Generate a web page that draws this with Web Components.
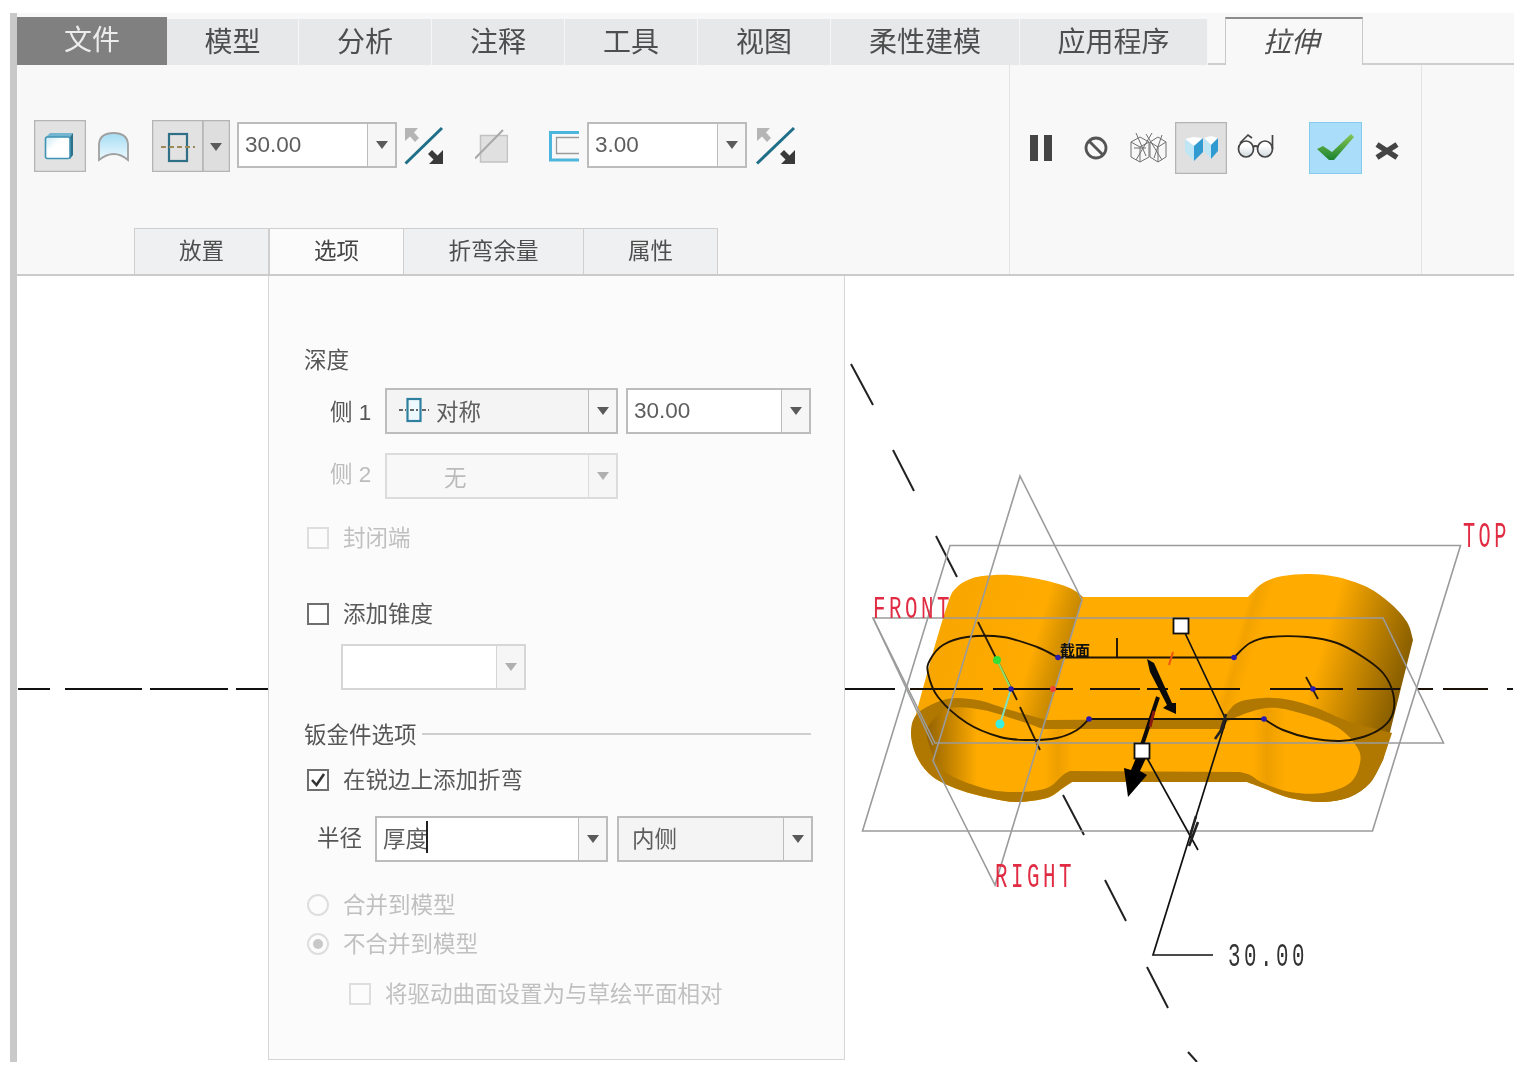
<!DOCTYPE html>
<html lang="zh"><head><meta charset="utf-8"><title>拉伸</title>
<style>html,body{margin:0;background:#fff}</style></head>
<body><creo-app></creo-app>
<script>
const FONT='"Liberation Sans","Noto Sans CJK SC",sans-serif';
function simple(name,css,html){customElements.define(name,class extends HTMLElement{constructor(){super();this.attachShadow({mode:'open'}).innerHTML=`<style>${css}</style>${html}`}})}
class Lazy extends HTMLElement{constructor(){super();this.attachShadow({mode:'open'})}}

/* ---------- ribbon tab ---------- */
customElements.define('ribbon-tab',class extends Lazy{
connectedCallback(){const w=this.getAttribute('w');
this.shadowRoot.innerHTML=`<style>
:host{display:flex;align-items:center;justify-content:center;box-sizing:border-box;width:${w}px;height:46px;padding-bottom:5px;background:#e6e8ea;color:#4e4e4e;font-size:28px;border-right:1px solid #f6f6f6;flex:none}
:host([kind=file]){background:#808080;color:#ececec;height:48px;border:0;padding-bottom:6px}
:host([kind=ctx]){background:#f8f8f8;height:48px;border:1px solid #c9c9c9;border-top:2px solid #8c8c8c;border-bottom:0;font-style:italic;margin-left:17px;padding-right:6px}
</style><slot></slot>`}});

simple('ribbon-tabs',`:host{display:flex;align-items:flex-end;height:48px}
i{flex:1;border-bottom:2px solid #cfcfcf;height:46px;box-sizing:border-box}
.s{flex:none;width:17px;margin-right:-17px;border-bottom:2px solid #cfcfcf;height:46px;box-sizing:border-box}`,
`<ribbon-tab kind="file" w="150">文件</ribbon-tab><ribbon-tab w="132">模型</ribbon-tab><ribbon-tab w="133">分析</ribbon-tab><ribbon-tab w="133">注释</ribbon-tab><ribbon-tab w="133">工具</ribbon-tab><ribbon-tab w="133">视图</ribbon-tab><ribbon-tab w="189">柔性建模</ribbon-tab><ribbon-tab w="188">应用程序</ribbon-tab><span class="s"></span><ribbon-tab kind="ctx" w="138">拉伸</ribbon-tab><i></i>`);

/* ---------- icons: every viewBox is in page coordinates ---------- */
const ICONS={
solid:[34,120,52,52,`<rect x="34.5" y="120.5" width="51" height="51" fill="#e2e2e2" stroke="#b4b4b4" stroke-width="1.5"/>
<defs><linearGradient id="a" x1="0" y1="0" x2="1" y2="1"><stop offset="0" stop-color="#c9e9f5"/><stop offset=".4" stop-color="#fff"/></linearGradient></defs>
<polygon points="46,137 50,133 73,133 70,137" fill="#74b6cf"/><polygon points="70,137 73,133 73,155 70,159" fill="#2d7088"/>
<rect x="45.5" y="137" width="24.5" height="21.5" rx="2" fill="url(#a)" stroke="#3f93b4" stroke-width="1.6"/>`],
surface:[97,120,33,52,`<defs><linearGradient id="a" x1="0" y1="0" x2="0" y2="1"><stop offset="0" stop-color="#a4dcf2"/><stop offset="1" stop-color="#eefaff"/></linearGradient></defs>
<path d="M99 160V144Q100 133 113.5 133Q127 133 128 144V160Q114 148 99 160Z" fill="url(#a)" stroke="#a0a0a0" stroke-width="1.8"/>`],
depth:[152,120,78,52,`<rect x="152.5" y="120.5" width="50.5" height="51" fill="#e2e2e2" stroke="#b4b4b4" stroke-width="1.5"/><rect x="203" y="120.5" width="26.5" height="51" fill="#dedede" stroke="#b4b4b4" stroke-width="1.5"/>
<rect x="169" y="134" width="18" height="27" fill="none" stroke="#2f6f88" stroke-width="2.2"/><path d="M161 147H195" stroke="#9c8a58" stroke-width="2.2" stroke-dasharray="5 3"/><path d="M210 143H222L216 151Z" fill="#5a5a5a"/>`],
flip:[404,120,40,52,`<path d="M405 128H418L414 132.5L419 138L415 142L410 136.5L405 141Z" fill="#b5b5b5"/><path d="M443 164H429L433.5 159.5L428 154L432 150L437.5 155.5L443 150Z" fill="#3a3a3a"/><path d="M405.5 163.5L442 128" stroke="#1f6f88" stroke-width="3"/>`],
thin:[475,120,33,52,`<rect x="480.5" y="135.5" width="27" height="26.5" fill="#e0e0e0" stroke="#c2c2c2" stroke-width="1.5"/><path d="M475 158.5L503 130" stroke="#a9a9a9" stroke-width="2"/>`],
thick:[549,120,31,52,`<path d="M579 132.5H550.5V160H579" fill="none" stroke="#4cb6dd" stroke-width="3"/><path d="M579 137.5H556.5V153.5H579" fill="none" stroke="#9a9a9a" stroke-width="1.3"/>`],
flip2:[755,120,41,52,`<path d="M757 128H770L766 132.5L771 138L767 142L762 136.5L757 141Z" fill="#b5b5b5"/><path d="M795 164H781L785.5 159.5L780 154L784 150L789.5 155.5L795 150Z" fill="#3a3a3a"/><path d="M757 163.5L794 128" stroke="#1f6f88" stroke-width="3"/>`],
pause:[1026,122,30,52,`<rect x="1030" y="135" width="8" height="26" fill="#444"/><rect x="1044" y="135" width="8" height="26" fill="#444"/>`],
stop:[1082,122,28,52,`<circle cx="1096" cy="148" r="10" fill="none" stroke="#555" stroke-width="2.8"/><path d="M1089 141L1103 155" stroke="#555" stroke-width="2.8"/>`],
wire:[1128,122,40,52,`<g fill="none" stroke="#707070" stroke-width="1"><path d="M1131 142L1140 137L1149 142V157L1140 162L1131 157Z M1140 147V162 M1131 142L1140 147L1149 142 M1136 133L1146 156 M1152 133L1136 160 M1134 148L1146 148"/><path d="M1150 142L1158 137L1166 142V157L1158 162L1150 157Z M1158 147V162 M1150 142L1158 147L1166 142 M1146 134L1162 160 M1162 135L1154 158"/></g>`],
shade:[1175,122,52,52,`<rect x="1175.5" y="122.5" width="51" height="51" fill="#e0e0e0" stroke="#b4b4b4" stroke-width="1.5"/>
<polygon points="1185,139 1193,137 1203,138 1194,146" fill="#fff"/><polygon points="1185,139 1194,146 1194,161 1185,152" fill="#bfe6f5"/><polygon points="1203,138 1194,146 1194,161 1203,152" fill="#2f9bd0"/>
<polygon points="1204,138 1211,136 1218,138 1211,145" fill="#fff"/><polygon points="1204,138 1211,145 1211,159 1204,151" fill="#bfe6f5"/><polygon points="1218,138 1211,145 1211,159 1218,151" fill="#2f9bd0"/>`],
glass:[1234,122,45,52,`<defs><linearGradient id="a" x1="0" y1="0" x2="0" y2="1"><stop offset=".3" stop-color="#fff"/><stop offset="1" stop-color="#cfd8dc"/></linearGradient></defs><g fill="url(#a)" stroke="#454545" stroke-width="1.7"><ellipse cx="1246" cy="149" rx="7.5" ry="8"/><ellipse cx="1265" cy="149" rx="7.5" ry="8"/></g><path d="M1253 147Q1255.5 145 1258 147M1240 143L1248 135L1252 138M1272.5 149V135" fill="none" stroke="#454545" stroke-width="1.7"/>`],
ok:[1309,122,53,52,`<defs><linearGradient id="a" x1="0" y1="0" x2="0" y2="1"><stop offset="0" stop-color="#86c653"/><stop offset="1" stop-color="#19822f"/></linearGradient></defs><rect x="1309.5" y="122.5" width="52" height="51" fill="#a9ddf9" stroke="#86cbec"/><polygon points="1317,149 1323,146 1332,152 1351,134 1354,137 1334,160 1329,160" fill="url(#a)"/>`],
cancel:[1370,122,32,52,`<path d="M1377 144.5L1397 157.5M1397 144.5L1377 157.5" stroke="#444" stroke-width="5.5"/>`]
};
customElements.define('ribbon-icon',class extends Lazy{
connectedCallback(){const [x,y,w,h,s]=ICONS[this.getAttribute('name')],ml=this.getAttribute('ml')||0;
this.shadowRoot.innerHTML=`<style>:host{display:block;flex:none;width:${w}px;height:${h}px;margin-left:${ml}px}svg{display:block}</style><svg width="${w}" height="${h}" viewBox="${x} ${y} ${w} ${h}">${s}</svg>`}});

/* ---------- combo ---------- */
customElements.define('combo-box',class extends Lazy{
connectedCallback(){const w=this.getAttribute('w'),ar=+this.getAttribute('arrow')||29,pad=this.getAttribute('pad')||6,ml=this.getAttribute('ml')||0,t=this.getAttribute('tone')||'white',pb=this.getAttribute('pb')||2;
const bg={white:'#fff',grey:'#f4f4f4',off:'#f8f8f8',blank:'#fff'}[t],bd=t=='off'?'#dcdcdc':t=='blank'?'#d6d6d6':'#bcbcbc',fg=t=='off'?'#bbb':'#5e5e5e',af=(t=='off'||t=='blank')?'#b0b0b0':'#5a5a5a';
this.shadowRoot.innerHTML=`<style>
:host{display:flex;box-sizing:border-box;flex:none;width:${w}px;height:46px;margin-left:${ml}px;border:2px solid ${bd};background:${bg};color:${fg};font-size:22.5px}
.v{flex:1;display:flex;align-items:center;gap:7px;padding-left:${pad}px;min-width:0;padding-bottom:${pb}px;box-sizing:border-box}
.a{flex:none;width:${ar-2}px;border-left:1.5px solid ${bd};background:#f6f6f6;display:flex;align-items:center;justify-content:center}
.a b{width:0;height:0;border:6px solid transparent;border-top:8px solid ${af};border-bottom:0}
</style><div class="v"><slot></slot></div><div class="a"><b></b></div>`}});

simple('sym-icon',`:host{display:block;width:30px;height:26px;flex:none}svg{display:block}`,`<svg width="30" height="26" viewBox="0 0 30 26"><rect x="8.5" y="2" width="13" height="22" fill="#eef9fd" stroke="#2f7f9f" stroke-width="2.2"/><path d="M0 13H7M23 13H30M11 13H19" stroke="#666" stroke-width="1.8" stroke-dasharray="4 2"/></svg>`);
simple('text-caret',`:host{display:block;width:2px;height:32px;background:#222;margin-left:-9px}`,``);

/* ---------- checks ---------- */
customElements.define('check-row',class extends Lazy{
connectedCallback(){const off=this.hasAttribute('off'),on=this.hasAttribute('on'),radio=this.hasAttribute('radio');
const bd=off?'#dedede':'#6f6f6f',fg=off?'#c0c0c0':'#5a5a5a';
this.shadowRoot.innerHTML=`<style>
:host{display:flex;align-items:center;height:22px;color:${fg};font-size:22.5px;white-space:nowrap}
.b{flex:none;box-sizing:border-box;width:22px;height:22px;border:2px solid ${bd};background:${off?'#fcfcfc':'#fff'};margin-right:14px;border-radius:${radio?'50%':'0'};display:flex;align-items:center;justify-content:center}
.d{width:10px;height:10px;border-radius:50%;background:#c8c8c8}
.t{margin-bottom:4px}
svg{display:block}
</style><span class="b">${on?(radio?'<span class="d"></span>':'<svg width="18" height="18" viewBox="0 0 18 18"><path d="M3 9L7.5 14L15 3" fill="none" stroke="#333" stroke-width="2.6"/></svg>'):''}</span><span class="t"><slot></slot></span>`}});

/* ---------- tool row ---------- */
simple('tool-row',`:host{display:flex;height:163px;color:#666}
.a,.b{display:flex;align-items:flex-start;box-sizing:border-box;border-right:1.5px solid #e4e4e4;flex:none}
.a{width:993px;padding-top:55px}.b{width:412px;padding-top:57px}
combo-box{margin-top:2px}
`,`<div class="a">
<ribbon-icon name="solid" ml="17"></ribbon-icon><ribbon-icon name="surface" ml="11"></ribbon-icon><ribbon-icon name="depth" ml="22"></ribbon-icon>
<combo-box w="160" ml="7" pad="6" pb="0">30.00</combo-box><ribbon-icon name="flip" ml="7"></ribbon-icon><ribbon-icon name="thin" ml="31"></ribbon-icon><ribbon-icon name="thick" ml="41"></ribbon-icon>
<combo-box w="160" ml="7" pad="6" pb="0">3.00</combo-box><ribbon-icon name="flip2" ml="8"></ribbon-icon></div>
<div class="b"><ribbon-icon name="pause" ml="16"></ribbon-icon><ribbon-icon name="stop" ml="26"></ribbon-icon><ribbon-icon name="wire" ml="18"></ribbon-icon><ribbon-icon name="shade" ml="7"></ribbon-icon><ribbon-icon name="glass" ml="7"></ribbon-icon><ribbon-icon name="ok" ml="30"></ribbon-icon><ribbon-icon name="cancel" ml="8"></ribbon-icon></div>`);

/* ---------- sub tabs ---------- */
simple('sub-tab',`:host{display:flex;align-items:center;justify-content:center;box-sizing:border-box;height:46px;padding-bottom:5px;background:#eef0f1;color:#4e4e4e;font-size:22.5px;border:1.5px solid #cfcfcf;border-left-width:0;border-bottom:0;flex:none}
:host([active]){background:#fbfbfb;color:#444;border-left:1.5px solid #cfcfcf}
:host([first]){border-left-width:1.5px}`,`<slot></slot>`);
simple('sub-tabs',`:host{display:flex;height:48px;padding-left:117px;box-sizing:border-box;border-bottom:2px solid #cbcbcb;align-items:flex-start}
.x{flex:none;height:46px;box-sizing:border-box;border-right:1.5px solid #e4e4e4}`,
`<sub-tab first style="width:135px">放置</sub-tab><sub-tab active style="width:135px">选项</sub-tab><sub-tab style="width:180px">折弯余量</sub-tab><sub-tab style="width:134px">属性</sub-tab><span class="x" style="width:292px"></span><span class="x" style="width:412px"></span>`);

/* ---------- option panel ---------- */
simple('option-panel',`
:host{position:absolute;left:251px;top:0;width:577px;height:784px;box-sizing:border-box;border:1.5px solid #d6d6d6;border-top:0;background:#fbfbfb;padding:73px 0 0 35px;color:#565656;font-size:22.5px}
.t{height:24px;line-height:24px}
.r{display:flex;align-items:center}
.l{flex:none;white-space:nowrap}
.off{color:#bcbcbc}
.g{display:flex;align-items:center;height:24px}
.g i{flex:1;height:1.5px;background:#cfcfcf;margin:0 33px 0 5px}
.c{margin-left:3px}
`,`<div class="t">深度</div>
<div class="r" style="margin-top:15px;padding-left:26px"><span class="l" style="width:55px;margin-bottom:2px">侧 1</span><combo-box w="233" tone="grey" pad="12"><sym-icon></sym-icon>对称</combo-box><combo-box w="185" ml="8" pad="6" pb="0">30.00</combo-box></div>
<div class="r off" style="margin-top:19px;padding-left:26px"><span class="l" style="width:55px;margin-bottom:8px">侧 2</span><combo-box w="233" tone="off" pad="57" pb="0">无</combo-box></div>
<check-row class="c" off style="margin-top:28px">封闭端</check-row>
<check-row class="c" style="margin-top:54px">添加锥度</check-row>
<div class="r" style="margin-top:19px;padding-left:37px"><combo-box w="185" tone="blank"></combo-box></div>
<div class="g" style="margin-top:32px"><span class="l" style="margin-bottom:2px">钣金件选项</span><i></i></div>
<check-row class="c" on style="margin-top:23px">在锐边上添加折弯</check-row>
<div class="r" style="margin-top:25px;padding-left:13px"><span class="l" style="width:58px;margin-bottom:6px">半径</span><combo-box w="233" pad="6" pb="4">厚度<text-caret></text-caret></combo-box><combo-box w="196" ml="9" tone="grey" pad="13" pb="4">内侧</combo-box></div>
<check-row class="c" radio off style="margin-top:32px">合并到模型</check-row>
<check-row class="c" radio off on style="margin-top:17px">不合并到模型</check-row>
<check-row off style="margin:28px 0 0 45px">将驱动曲面设置为与草绘平面相对</check-row>`);

/* ---------- the 3D model ---------- */
function seg(p){let d='L'+p[0][0]+' '+p[0][1];for(let i=0;i<p.length-1;i++){const a=p[Math.max(i-1,0)],b=p[i],c=p[i+1],e=p[Math.min(i+2,p.length-1)];
d+=`C${b[0]+(c[0]-a[0])/6} ${b[1]+(c[1]-a[1])/6} ${c[0]-(e[0]-b[0])/6} ${c[1]-(e[1]-b[1])/6} ${c[0]} ${c[1]}`}return d}
const P=(...s)=>'M'+s.map(seg).join('').slice(1)+'Z';
const sil=P([[911,733],[930,663],[948,603],[956,588],[968,580],[983,576],[1010,575],[1043,580],[1070,588],[1083,597]],[[1248,597],[1263,583],[1283,576],[1310,574],[1337,577],[1367,587],[1390,603],[1407,622],[1413,640]],[[1383,760],[1370,783],[1350,797],[1323,802],[1290,798],[1263,788],[1247,782]],[[1072,782],[1063,788],[1047,798],[1017,802],[990,798],[960,790],[933,777],[917,757],[911,733]]);
const rim=P([[1047,720],[1010,710],[977,700],[947,699],[918,713],[911,733],[917,757],[933,777],[960,790],[990,798],[1017,802],[1047,798],[1063,788],[1072,782]],[[1247,782],[1263,788],[1290,798],[1323,802],[1350,797],[1370,783],[1383,760]],[[1392,733],[1350,722],[1317,708],[1290,700],[1263,698],[1237,703],[1223,719]]);
const hol=P([[1225,729],[1230,720],[1267,708],[1300,713],[1337,727],[1357,747],[1360,763],[1350,783],[1323,793],[1290,792],[1263,783],[1250,775],[1240,772]],[[1070,771],[1063,775],[1047,788],[1017,792],[983,788],[943,770],[927,737],[933,720],[950,708],[983,710],[1017,720],[1043,729]]);
const open=p=>'M'+seg(p).slice(1);
const sk1=open([[1058,657.5],[1037,647],[1003,637],[967,637],[943,645],[930,660],[928,673],[938,697],[967,723],[1000,737],[1027,740],[1057,738],[1077,730],[1089,719]]);
const sk2=open([[1234,657.5],[1250,643],[1270,637],[1307,637],[1337,643],[1363,657],[1383,673],[1393,693],[1393,713],[1383,727],[1363,737],[1340,741],[1310,738],[1283,730],[1264,719]]);
const hd=[[18,50],[65,142],[150,228],[236,268],[845,895],[910,983],[993,1073],[1090,1140],[1147,1168],[1180,1240],[1270,1343],[1357,1400],[1417,1433],[1443,1488],[1507,1513]];
const dg=[[851,364,873,405],[893,450,914,491],[936,536,957,577],[978,622,1017,700],[1020,707,1040,750],[1063,795,1084,835],[1105,880,1126,921],[1147,967,1168,1008],[1188,1052,1197,1062]];
const dots=[[1058,657.5],[1089,719],[1234,657.5],[1264,719],[1011,689],[1313,689]];
simple('model-view',`:host{position:absolute;inset:0;display:block}svg{display:block}
text{font-family:"Liberation Mono","Noto Sans CJK SC",monospace}`,
`<svg width="1497" height="786" viewBox="17 276 1497 786">
<defs>
<linearGradient id="w" gradientUnits="userSpaceOnUse" x1="929" y1="650" x2="1380" y2="783">
<stop offset="0" stop-color="#f8a600"/><stop offset=".21" stop-color="#ffab00"/><stop offset=".28" stop-color="#c78800"/><stop offset=".283" stop-color="#ffab00"/><stop offset=".62" stop-color="#ffab00"/><stop offset=".635" stop-color="#f2a200"/><stop offset=".665" stop-color="#ffab00"/><stop offset=".8" stop-color="#ffab00"/><stop offset=".92" stop-color="#b07800"/><stop offset="1" stop-color="#7f5800"/></linearGradient>
<linearGradient id="h" gradientUnits="userSpaceOnUse" x1="925" y1="0" x2="1400" y2="0">
<stop offset="0" stop-color="#8f6000"/><stop offset=".11" stop-color="#ffab00"/><stop offset=".25" stop-color="#ffab00"/><stop offset=".28" stop-color="#ee9f00"/><stop offset=".31" stop-color="#ffab00"/><stop offset=".69" stop-color="#ffab00"/><stop offset=".72" stop-color="#ee9f00"/><stop offset=".76" stop-color="#ffab00"/></linearGradient>
</defs>
<g stroke="#111" stroke-width="2" fill="none"><path d="${hd.map(a=>`M${a[0]} 689H${a[1]}`).join('')}"/></g>
<path d="${dg.slice(0,3).concat(dg.slice(5)).map(a=>`M${a[0]} ${a[1]}L${a[2]} ${a[3]}`).join('')}" stroke="#222" stroke-width="2"/>
<path d="${sil}" fill="url(#w)"/><path d="${rim}" fill="#b07800"/><path d="${hol}" fill="url(#h)"/>
<path d="${hd.slice(5,14).map(a=>`M${a[0]} 689H${a[1]}`).join('')}" stroke="#1a1208" stroke-width="2"/>
<path d="${dg.slice(3,5).map(a=>`M${a[0]} ${a[1]}L${a[2]} ${a[3]}`).join('')}M1306 677L1318 699" stroke="#2a1c05" stroke-width="1.8"/>
<path d="${sk1}${sk2}M1058 657.5H1234M1089 719H1264M1117 638V657" fill="none" stroke="#1f1505" stroke-width="1.9"/>
<g fill="none" stroke="#9b9b9b" stroke-width="1.6"><polygon points="950,545.5 1460.5,545.5 1372.5,831 862.5,831"/><polygon points="873,618 1383,618 1443.5,743 935,743"/><polygon points="1020,476 1082,600 995,885 933,761"/><path d="M873 618L933 745"/></g>
<path d="M997 660L1011 689" stroke="#8fe06a" stroke-width="2"/><path d="M1011 689L1000 724" stroke="#7fe0c0" stroke-width="2"/>
<circle cx="997" cy="660" r="4" fill="#35e035"/><circle cx="1000" cy="724" r="4.5" fill="#38efe0"/><circle cx="1053" cy="689" r="3" fill="#f04530"/>
${dots.map(d=>`<circle cx="${d[0]}" cy="${d[1]}" r="2.8" fill="#2a1ab0"/>`).join('')}
<path d="M1173 652L1169 665" stroke="#f05510" stroke-width="2"/>
<path d="M1147 659L1154 663L1172 703L1176 703L1176 714L1163 708L1167 705L1150 672Z" fill="#0a0a0a"/>
<path d="M1158 697L1142 745" stroke="#0a0a0a" stroke-width="4"/><path d="M1154 711L1150 727" stroke="#8a1a10" stroke-width="3"/>
<path d="M1136 758L1146 758L1140 771L1147 775L1128 797L1124 768L1131 770Z" fill="#000"/>
<path d="M1185 633L1226 720L1153 955H1213M1147 758L1198 850" fill="none" stroke="#111" stroke-width="1.7"/>
<path d="M1226 714L1220 733M1224 726L1215 739M1196 816L1190 836M1198 822L1189 846" fill="none" stroke="#222" stroke-width="2.6"/>
<rect x="1173.5" y="618.5" width="15" height="15" fill="#fff" stroke="#111" stroke-width="1.8"/><rect x="1134.5" y="743.5" width="15" height="15" fill="#fff" stroke="#111" stroke-width="1.8"/>
<text font-size="15" font-weight="700" fill="#111" x="1060" y="656" style="font-family:'Noto Sans CJK SC',sans-serif">截面</text>
<g fill="#e02b42" font-size="26" letter-spacing="4.4"><text transform="translate(873 618) scale(.8 1.24)">FRONT</text><text transform="translate(995 887) scale(.8 1.32)">RIGHT</text><text transform="translate(1463 547) scale(.78 1.4)">TOP</text></g>
<text transform="translate(1228 966) scale(.8 1.25)" font-size="26" letter-spacing="4.4" fill="#333">30.00</text>
</svg>`);

simple('canvas-area',`:host{display:block;position:relative;height:786px;background:#fff;overflow:hidden}`,`<model-view></model-view><option-panel></option-panel>`);
simple('ribbon-bar',`:host{display:block;background:#f8f8f8;padding-top:4px}`,`<ribbon-tabs></ribbon-tabs><tool-row></tool-row><sub-tabs></sub-tabs>`);
simple('creo-app',`:host{display:flex;width:1514px;box-sizing:border-box;padding:13px 0 0 10px;font-family:${FONT};filter:blur(.45px)}
.s{flex:none;width:7px;background:#c9c9c9;height:1049px}.m{flex:1;min-width:0}`,
`<div class="s"></div><div class="m"><ribbon-bar></ribbon-bar><canvas-area></canvas-area></div>`);
</script></body></html>
